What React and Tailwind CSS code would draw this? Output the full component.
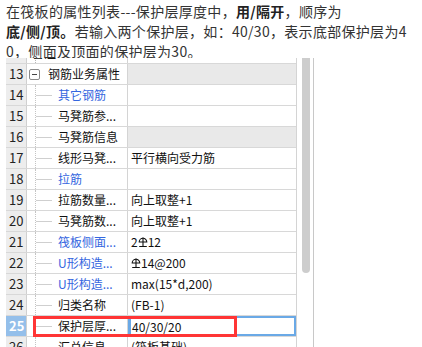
import React from 'react';

const FONT = { fontFamily: '"Noto Sans CJK SC", "Noto Sans", sans-serif' };

// HRB400 rebar grade symbol
function RebarIcon() {
  return (
    <svg width="10" height="12" viewBox="0 0 10 12" className="inline-block align-[-1px]">
      <path d="M1.2 6 A3.8 3.8 0 0 1 8.8 6 Z" fill="none" stroke="#111" strokeWidth="1.1" />
      <path d="M5 1.5 V10.5 M1.2 10.5 H8.8" stroke="#111" strokeWidth="1.1" fill="none" />
    </svg>
  );
}

const rows = [
  { n: 12, name: '备注', level: 0 },
  { n: 13, name: '钢筋业务属性', group: true },
  { n: 14, name: '其它钢筋', blue: true },
  { n: 15, name: '马凳筋参...' },
  { n: 16, name: '马凳筋信息', gray: true },
  { n: 17, name: '线形马凳...', value: '平行横向受力筋' },
  { n: 18, name: '拉筋', blue: true },
  { n: 19, name: '拉筋数量...', value: '向上取整+1' },
  { n: 20, name: '马凳筋数...', value: '向上取整+1' },
  { n: 21, name: '筏板侧面...', blue: true, value: <>2<RebarIcon />12</> },
  { n: 22, name: 'U形构造...', blue: true, value: <><RebarIcon />14@200</> },
  { n: 23, name: 'U形构造...', blue: true, value: 'max(15*d,200)' },
  { n: 24, name: '归类名称', value: '(FB-1)' },
  { n: 25, name: '保护层厚...', value: '40/30/20', selected: true },
  { n: 26, name: '汇总信息', value: '(筏板基础)' },
];

function Row({ row }) {
  return (
    <div className="flex h-[21px] border-b border-[#d8d8d8]">
      <div
        className={`w-[21px] shrink-0 border-r border-[#d0d0d0] pl-[3px] text-[13px] leading-[20px] ${
          row.selected ? 'bg-[#94bfea] text-white font-bold' : 'bg-[#ededed] text-[#222]'
        }`}
      >
        {row.n}
      </div>
      <div className="w-[101px] shrink-0 border-r border-[#d4d4d4] flex items-stretch text-[12px] leading-[20px] bg-white">
        {row.level === 0 ? (
          <>
            <div className="ml-[8px] w-0 border-l border-dotted border-[#b8b8b8]" />
            <span className="ml-[-4px] text-[#111]">{row.name}</span>
          </>
        ) : row.group ? (
          <>
            <div className="ml-[2px] flex items-center">
              <div className="w-[11px] h-[11px] border border-[#8a8a8a] rounded-[2px] flex items-center justify-center bg-white">
                <div className="w-[5px] h-px bg-[#444]" />
              </div>
            </div>
            <span className="ml-[8px] text-[#111]">{row.name}</span>
          </>
        ) : (
          <>
            <div className="ml-[8px] w-[17px] shrink-0 border-l border-dotted border-[#c4c4c4] flex items-center">
              <div className="w-full h-0 border-t border-[#cfcfcf]" />
            </div>
            <span className={`ml-[6px] truncate ${row.blue ? 'text-[#3466e0]' : 'text-[#111]'}`}>{row.name}</span>
          </>
        )}
      </div>
      <div
        className={`flex-1 text-[12px] text-[#111] whitespace-nowrap overflow-hidden ${
          row.gray || row.group ? 'bg-[#e9e9e9]' : 'bg-white'
        } ${
          row.selected
            ? 'border-2 border-l-[3px] border-[#6aa9e6] pl-[1px] leading-[17px]'
            : 'pl-[3px] leading-[20px]'
        }`}
      >
        {row.value}
      </div>
    </div>
  );
}

export default function App() {
  return (
    <div className="w-[422px] h-[347px] bg-white overflow-hidden relative" style={FONT}>
      {/* Instruction text */}
      <div className="h-[58px] px-[6px] pt-px text-[14px] leading-[20px] tracking-[0.3px] text-[#333] relative z-10 bg-white overflow-hidden">
        在筏板的属性列表---保护层厚度中，<b className="text-[#222]">用/隔开</b>，顺序为
        <br />
        <b className="text-[#222]">底/侧/顶。</b>若输入两个保护层，如：40/30，表示底部保护层为4
        <br />
        0，侧面及顶面的保护层为30。
      </div>

      {/* Property grid */}
      <div className="flex h-[289px]">
        <div className="w-[6px] shrink-0" />
        <div className="w-[291px] shrink-0 h-full overflow-hidden border-r border-[#d4d4d4]">
          <div className="mt-[-15px]">
            {rows.map((r) => (
              <Row key={r.n} row={r} />
            ))}
          </div>
        </div>
        <div className="w-[5px] shrink-0" />
        <div className="w-[8px] shrink-0">
          <div className="h-[215px] bg-[#cdcdcd] rounded-b-[4px]" />
        </div>
        <div className="w-[3px] shrink-0" />
        <div className="w-px shrink-0 bg-[#c8c8c8]" />
      </div>

      {/* Red annotation frame */}
      <div className="absolute left-[33px] top-[316px] w-[204px] h-[21px] border-[3px] border-[#ff3535]" />
    </div>
  );
}
